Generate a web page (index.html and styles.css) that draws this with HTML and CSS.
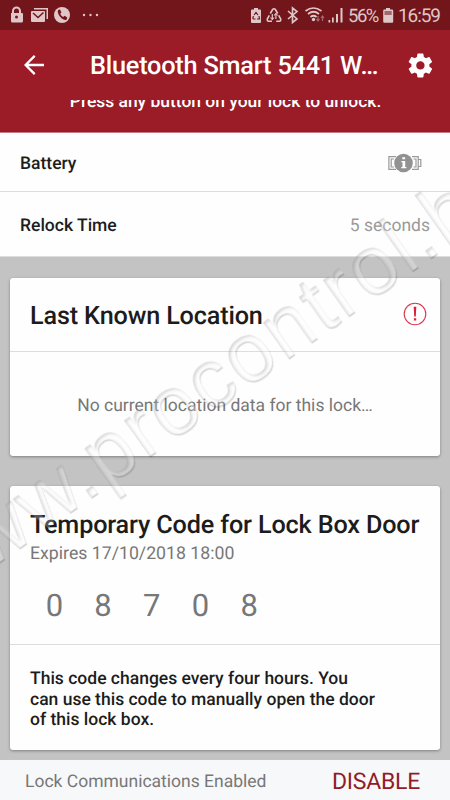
FILE: index.html
```html
<!DOCTYPE html>
<html lang="en">
<head>
<meta charset="utf-8">
<title>Lock settings</title>
<link rel="stylesheet" href="styles.css">
</head>
<body>
<div class="screen">
  <div class="status">
    <svg class="status-left" width="110" height="30" viewBox="0 0 110 30" fill="#dfc6c8">
      <path fill-rule="evenodd" d="M11 13h1v-2a4.500 4.500 0 0 1 9 0v2h1q1 0 1 1v7q0 1.500-1.500 1.500h-9Q11 22.500 11 21zM14 13h5v-2a2.500 2.500 0 0 0-5 0zM15 17a1.500 1.500 0 1 0 3 0a1.500 1.500 0 1 0-3 0z"/>
      <path d="M34 8h14v11h-1.500V9.500H34z"/><rect x="31" y="11" width="14" height="11" rx="1"/><path d="M33 13l5 4.500 5.500-5" fill="none" stroke="#73161c" stroke-width="1.500"/>
      <circle cx="62" cy="15" r="8"/><path d="M58 10l2-.5 1.500 3-1.300 1.200q1 2.300 3 3.300l1.400-1.200 2.700 1.700-.8 2.200q-2 1-5-1.500-4.500-4-3.500-8.200z" fill="#73161c"/>
      <circle cx="84" cy="15" r="1.200"/><circle cx="90.500" cy="15" r="1.200"/><circle cx="97" cy="15" r="1.200"/>
    </svg>
    <div class="status-right">
      <svg width="96" height="30" viewBox="249 0 96 30" fill="#dfc6c8">
        <path d="M254 8h4v1.500h2q1 0 1 1V22q0 1-1 1h-8q-1 0-1-1V10.500q0-1 1-1h2z"/>
        <g fill="none" stroke="#73161c" stroke-width="1.200"><path d="M254 15l2-2.500 2 2.500M259 16l.5 3h-2.500M252.800 19l.5-3M255.500 19h-2.500"/></g>
        <g fill="none" stroke="#dfc6c8" stroke-width="1.600"><path d="M270.300 13.500l2.300-4q1.400-1.600 2.800 0l2.300 4M278.700 15.300l2 3.700q.5 2.300-2 2.300h-2.500M272 21.300h-2.700q-2.500 0-2-2.300l2-3.700"/><path d="M272.300 14v5.500M275.900 19v-5.500" stroke-width="1.200"/><path d="M270.500 17.500l1.800 2 1.800-2M274.100 15.500l1.800-2 1.800 2" stroke-width="1.100"/></g>
        <path d="M288 11l9 8-4.500 3.500V8l4.500 3.500-9 7.500" fill="none" stroke="#dfc6c8" stroke-width="1.600"/>
        <g fill="none" stroke="#dfc6c8" stroke-width="1.700"><path d="M305.500 11q8-6 16 0M308 14q5.500-4.500 11 0M310.500 17q3-2.500 6 0"/></g><circle cx="313.500" cy="19.500" r="1.700"/>
        <g fill="none" stroke="#a6686d" stroke-width="1.200"><path d="M318 16v5M316.500 19l1.500 2 1.500-2M322.500 21v-5M321 18l1.500-2 1.500 2"/></g>
        <path d="M328.500 20h1.700v2.500h-1.700zM332 17.500h1.700v5H332zM336 14h2v8.500h-2zM340.500 8h2v14.500h-2z"/>
      </svg>
      <span class="pct">56%</span>
      <svg width="11" height="30" viewBox="383 0 11 30"><path d="M386 8h4v1.500h2q1.200 0 1.200 1.200v11q0 1-1 1h-8q-1 0-1-1v-11q0-1.200 1-1.200h1.800z" fill="#dfc6c8"/><rect x="384.500" y="11" width="7.200" height="4" fill="#a2676b"/></svg>
      <span class="clock">16:59</span>
    </div>
  </div>
  <header class="toolbar">
    <svg width="20" height="20" viewBox="0 0 20 20" fill="none" stroke="#fff" stroke-width="2.300"><path d="M20 10H2M10.700 .9L1.600 10l9.100 9.100"/></svg>
    <h1>Bluetooth Smart 5441 W…</h1>
    <svg class="gear" width="28.800" height="28.800" viewBox="0 0 24 24" fill="#fff"><path d="M19.430 12.980c.04-.32.07-.64.07-.98s-.03-.66-.07-.98l2.110-1.650c.19-.15.24-.42.12-.64l-2-3.460c-.12-.22-.39-.3-.61-.22l-2.490 1c-.52-.4-1.080-.73-1.690-.98l-.38-2.650C14.460 2.180 14.250 2 14 2h-4c-.25 0-.46.18-.49.42l-.38 2.650c-.61.25-1.170.59-1.690.98l-2.490-1c-.23-.09-.49 0-.61.22l-2 3.460c-.13.22-.07.49.12.64l2.110 1.650c-.04.32-.07.65-.07.98s.03.66.07.98l-2.110 1.650c-.19.15-.24.42-.12.64l2 3.460c.12.22.39.3.61.22l2.490-1c.52.4 1.080.73 1.690.98l.38 2.650c.03.24.24.42.49.42h4c.25 0 .46-.18.49-.42l.38-2.650c.61-.25 1.170-.59 1.690-.98l2.490 1c.23.09.49 0 .61-.22l2-3.460c.12-.22.07-.49-.12-.64l-2.110-1.650zM12 15.500c-1.930 0-3.500-1.570-3.500-3.500s1.570-3.500 3.500-3.500 3.500 1.570 3.500 3.500-1.570 3.500-3.500 3.500z"/></svg>
  </header>
  <div class="hint"><p>Press any button on your lock to unlock.</p></div>
  <main>
    <div class="row battery"><span>Battery</span>
      <svg width="34" height="22" viewBox="0 0 34 22"><g fill="none" stroke="#999" stroke-width="1.200"><path d="M8 4.600H.9v12.800H8M6 7H3.200v8H6M24 4.600h6.200v12.800H24M25.500 7h2.500v8h-2.500M30.200 7.500h2.600v7h-2.600"/></g><circle cx="15.500" cy="11" r="9.300" fill="#929292"/><path d="M14.300 5.300h2.800v2h-2.800zM13.300 9h3.900v6h1.200v1.300h-5.100V15h1.200v-4.700h-1.200z" fill="#fff"/></svg>
    </div>
    <div class="row relock"><span>Relock Time</span><span class="value">5 seconds</span></div>
    <section class="card location">
      <div class="card-head"><h2>Last Known Location</h2>
        <svg width="24" height="24" viewBox="0 0 24 24"><circle cx="12" cy="12" r="10.800" fill="none" stroke="#d8374c" stroke-width="1.100"/><path d="M10.700 4.800h2.600l-.5 9.600h-1.600zM10.900 16.200h2.300v2.300h-2.300z" fill="#dc2038"/></svg>
      </div>
      <p class="empty">No current location data for this lock…</p>
    </section>
    <section class="card code">
      <div class="code-head"><h2>Temporary Code for Lock Box Door</h2>
        <p class="expires">Expires 17/10/2018 18:00</p>
        <div class="digits"><span>0</span><span>8</span><span>7</span><span>0</span><span>8</span></div>
      </div>
      <p class="note">This code changes every four hours. You<br>can use this code to manually open the door<br>of this lock box.</p>
    </section>
  </main>
  <footer><span class="comm">Lock Communications Enabled</span><span class="disable">DISABLE</span></footer>
  <svg class="watermark" width="450" height="800" viewBox="0 0 450 800">
    <defs>
      <filter id="emboss" x="-5%" y="-20%" width="110%" height="140%" color-interpolation-filters="sRGB">
        <feGaussianBlur in="SourceAlpha" stdDeviation="1.800" result="b"/>
        <feOffset in="b" dx="1" dy="1.500" result="bo"/>
        <feFlood flood-color="#000" flood-opacity=".17"/>
        <feComposite in2="bo" operator="out"/>
        <feComposite in2="SourceAlpha" operator="in" result="inner"/>
        <feOffset in="SourceAlpha" dx="0.300" dy="1.700" result="so"/>
        <feFlood flood-color="#000" flood-opacity=".15"/>
        <feComposite in2="so" operator="in"/>
        <feComposite in2="SourceAlpha" operator="out" result="outer"/>
        <feFlood flood-color="#fff" flood-opacity=".26"/>
        <feComposite in2="SourceAlpha" operator="in" result="face"/>
        <feMerge><feMergeNode in="outer"/><feMergeNode in="face"/><feMergeNode in="inner"/></feMerge>
      </filter>
    </defs>
    <g transform="translate(151 455) rotate(-35.200)"><text x="-262.600" y="0" filter="url(#emboss)">www.procontrol.hu</text></g>
  </svg>
</div>
</body>
</html>
```
FILE: styles.css
```css
* { box-sizing: border-box; margin: 0; padding: 0; }
body { font-family: Roboto, "Liberation Sans", sans-serif; color: #1c1c1c; background: #c3c3c3; text-rendering: geometricPrecision; }
svg { display: block; flex: none; }
.screen { position: relative; width: 450px; height: 800px; overflow: hidden; display: flex; flex-direction: column; background: #c3c3c3; white-space: nowrap; }
.status { height: 30px; flex: none; background: #73161c; display: flex; justify-content: space-between; color: #dfc6c8; font-size: 18px; line-height: 32px; }
.status-right { display: flex; width: 201px; }
.pct { width: 38px; padding-left: 3px; font-size: 18.500px; letter-spacing: -1.500px; }
.clock { padding-left: 4px; font-size: 19px; letter-spacing: -1.100px; }
.toolbar { height: 70px; flex: none; background: #9b1b27; color: #fff; display: flex; align-items: center; padding-left: 24px; }
.toolbar h1 { font-size: 25.300px; font-weight: 500; line-height: 30px; width: 315px; padding-left: 46px; margin-top: 4px; letter-spacing: -.22px; }
.gear { margin-left: 47px; }
.hint { height: 33px; flex: none; background: #9b1b27; color: #fff; overflow: hidden; text-align: center; border-bottom: 1px solid #c57b82; }
.hint p { font-size: 17.450px; font-weight: 500; line-height: 20px; margin-top: -8px; padding-left: 1px; }
main { flex: 1; padding: 0; }
.row { display: flex; justify-content: space-between; align-items: center; padding: 0 20px; background: #fefefe; font-size: 17.500px; font-weight: 500; }
.battery { height: 59px; border-bottom: 1px solid #ddd; padding-right: 28px; }
.battery svg { margin-top: 1px; }
.relock { height: 65px; border-bottom: 1px solid #ddd; padding-top: 4px; }
.battery span { padding-top: 3px; }
.value { color: #999; font-weight: 400; }
.card { margin: 0 10px 30px; background: #fefefe; border-radius: 3px; box-shadow: 0 1px 3px rgba(0,0,0,.35); }
.location { height: 178px; margin-top: 21px; }
.card-head { height: 74px; border-bottom: 1px solid #ddd; padding: 0 13px 0 20px; display: flex; align-items: center; justify-content: space-between; }
.card-head svg { margin-top: -1px; }
.card-head h2 { margin-top: 3px; }
h2 { font-size: 25.200px; font-weight: 500; line-height: 30px; padding-top: 1px; letter-spacing: -.15px; }
.empty { text-align: center; font-size: 17.500px; line-height: 20px; color: #777; padding-top: 44px; }
.code { height: 264px; margin-bottom: 0; }
.code-head { height: 159px; border-bottom: 1px solid #ddd; padding: 24px 0 0 20px; }
.expires { font-size: 17.700px; line-height: 20px; color: #777; margin-top: 3px; }
.digits { display: grid; grid-template-columns: repeat(5, 48.700px); text-align: center; font-size: 31px; line-height: 36px; color: #777; margin-top: 24px; }
.note { padding: 24px 20px; font-size: 17.500px; font-weight: 500; line-height: 20.500px; }
footer { height: 40px; flex: none; background: #f7f8fa; display: flex; align-items: center; justify-content: space-between; padding: 3px 30px 0 25px; }
.comm { font-size: 17.500px; color: #777; }
.disable { font-size: 23px; letter-spacing: -.25px; color: #901c28; }
.watermark { position: absolute; left: 0; top: 0; pointer-events: none; }
.watermark text { font-family: "Liberation Sans", Arial, sans-serif; font-size: 83px; letter-spacing: 2.100px; }
```
